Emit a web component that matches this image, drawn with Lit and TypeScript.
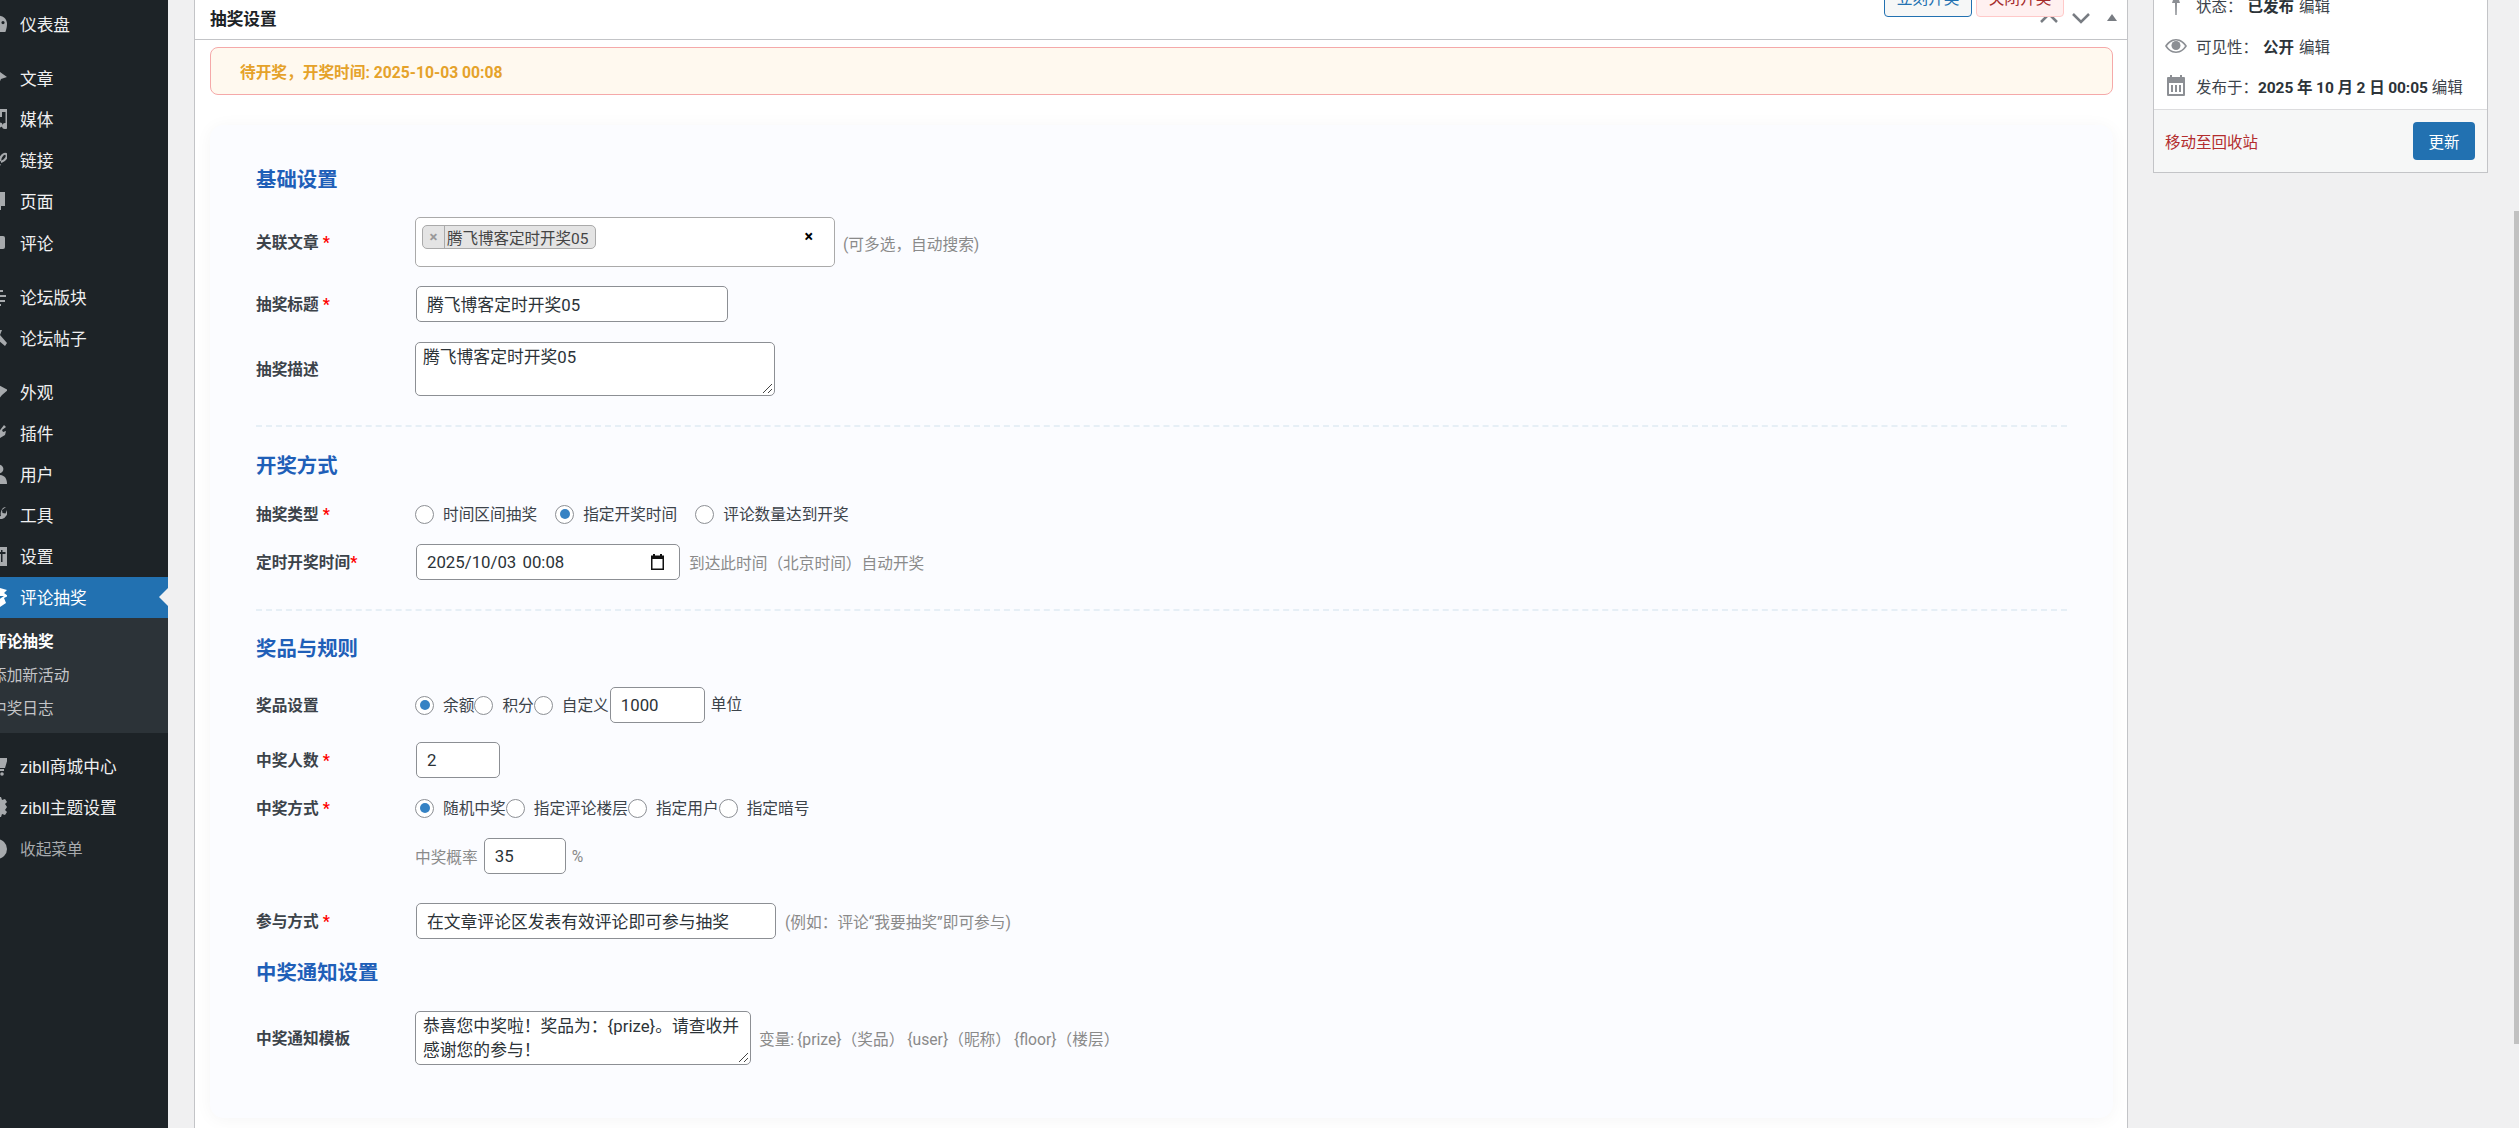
import { LitElement, html, css, svg } from "lit";
import { customElement } from "lit/decorators.js";

const ICONS: Record<string, unknown> = {
  dash: svg`<path fill-rule="evenodd" d="M10 2a8 8 0 0 1 10 8c0 3-.6 5-1.6 8H3C2 15 1 13 1 10a9 9 0 0 1 9-8zm6 5a1.6 1.6 0 1 0 0 3.2A1.6 1.6 0 0 0 16 7z"/>`,
  post: svg`<path d="M9 1l11 8-6 2-3 7-8-6 2-5z"/><path d="M13 11l-3 3-2-2z" fill="#8a5a3a"/>`,
  media: svg`<path d="M13 0h8v17a3 3 0 1 1-2.5-3V3H15v5h-2zM8 2h3v4H8z"/><circle cx="13" cy="16" r="2.4"/>`,
  link: svg`<path fill="none" stroke="#a7aaad" stroke-width="2.2" d="M13 11c0-5 4-8 6-7 2 2 0 6-5 8"/><path fill="none" stroke="#a7aaad" stroke-width="2.2" d="M13 14l-3 4"/>`,
  page: svg`<path d="M5 1h13v14h-4v4H5z"/>`,
  comment: svg`<path d="M5 3h11a2 2 0 0 1 2 2v9a2 2 0 0 1-2 2H5z"/>`,
  forum: svg`<path fill="none" stroke="#a7aaad" stroke-width="2" d="M4 4h12M2 9h17M4 14h14M9 18h5"/>`,
  tack: svg`<path d="M11 2l4 0-2 5 7 8-2 3-8-7-4 2 0-4z"/>`,
  brush: svg`<path d="M8 1l13 7-6 5-5 6-6-7z"/>`,
  plug: svg`<path d="M17 2l2 2-4 3 1 2 3-1-1 4-5 3-4 3-3-3 5-5z"/>`,
  user: svg`<circle cx="12" cy="5" r="4.4"/><path d="M3 20c0-6 3-9 9-9s8 4 8 9z"/>`,
  tool: svg`<path d="M19 2l-4 3 .5 3 3 .5L20 5a7 7 0 0 1-5 9c-3 .3-5-.6-7-3l2-2c1 2 3 2.400 4 2-1-2 0-9 5-9z"/>`,
  set: svg`<path fill-rule="evenodd" d="M3 1h17v19H3zM14 4v2h-3v2h3v8h1.500V8h3V6h-3V4zM11 10v6h1v-6z"/>`,
  gift: svg`<path d="M9 0l11 3-3 3 4 3-4 2 2 5-6 4-7-2-1-9 7-2-6-2z"/><path d="M11 9l6 0-6 4z" fill="#2271b1"/>`,
  cart: svg`<path d="M4 2h17l-3 10H8v1h9v2H6V4H4z"/><circle cx="8" cy="18" r="1.800"/><circle cx="15" cy="18" r="1.800"/>`,
  gear: svg`<path d="M10 0h4l1 3 3-1 2 3-2 2 2 3-2 3 2 2-2 3-3-1-1 3h-4l-1-3-6 0V2l6 1z"/>`,
  collapse: svg`<circle cx="10" cy="10" r="10"/>`,
};

const MENU = [
  ["dash", "仪表盘"],
  null,
  ["post", "文章"],
  ["media", "媒体"],
  ["link", "链接"],
  ["page", "页面"],
  ["comment", "评论"],
  null,
  ["forum", "论坛版块"],
  ["tack", "论坛帖子"],
  null,
  ["brush", "外观"],
  ["plug", "插件"],
  ["user", "用户"],
  ["tool", "工具"],
  ["set", "设置"],
] as const;

@customElement("app-root")
export class AppRoot extends LitElement {
  static styles = css`
    :host {
      display: flex;
      width: 2519px;
      height: 1128px;
      overflow: hidden;
      background: #f0f0f1;
      color: #2c3338;
      font-family: Roboto, "Noto Sans CJK SC", sans-serif;
      font-size: 15.7px;
    }
    /* admin menu */
    .nav {
      width: 168px;
      flex: none;
      background: #1d2327;
      overflow: hidden;
      padding-top: 3.500px;
      box-sizing: border-box;
      color: #f0f0f1;
    }
    .mi {
      height: 41.100px;
      display: flex;
      align-items: center;
      font-size: 16.7px;
    }
    .mi svg {
      width: 20px;
      height: 20px;
      flex: none;
      margin-left: -13px;
      margin-right: 13px;
      fill: #a7aaad;
    }
    .sep { height: 13px; }
    .mi.cur { background: #2271b1; color: #fff; }
    .mi.cur svg { fill: #fff; }
    .arrow {
      margin-left: auto;
      width: 0;
      height: 0;
      border: 9px solid transparent;
      border-right-color: #f0f0f1;
      border-left-width: 0;
    }
    .sub {
      background: #2c3338;
      height: 115px;
      padding-top: 7.500px;
      box-sizing: border-box;
      margin-bottom: 13px;
      font-size: 15.7px;
      color: #c3c4c7;
    }
    .sub div {
      height: 33.500px;
      line-height: 33.500px;
      margin-left: -9px;
      white-space: nowrap;
    }
    .sub .on { color: #fff; font-weight: 700; }
    .mi.dim { color: #a7aaad; font-size: 15.700px; }

    /* main metabox */
    .box {
      width: 1934px;
      margin-left: 26px;
      flex: none;
      background: #fff;
      border-left: 1px solid #c3c4c7;
      border-right: 1px solid #c3c4c7;
      box-sizing: border-box;
    }
    .head {
      height: 40px;
      box-sizing: border-box;
      border-bottom: 1px solid #c3c4c7;
      display: flex;
      align-items: center;
      padding: 0 5px 0 15px;
    }
    .head h2 {
      margin: 0 0 4px;
      font-size: 16.700px;
      font-weight: 700;
      color: #1d2327;
    }
    .tb {
      position: relative;
      z-index: 1;
      align-self: flex-start;
      width: 88px;
      height: 39px;
      margin-top: -22px;
      box-sizing: border-box;
      border: 1px solid #2271b1;
      border-radius: 4px;
      background: #f6f7f7;
      color: #2271b1;
      display: flex;
      align-items: center;
      justify-content: center;
      font-size: 15.700px;
    }
    .tb.go { margin-left: auto; }
    .tb.off {
      margin-left: 4px;
      background: #fff0f0;
      border-color: #ffc9c9;
      color: #a52a2a;
    }
    .ch { width: 20px; height: 20px; flex: none; margin-bottom: 3px; }
    .ch.u { margin-left: -25px; }
    .ch.d { margin-left: 12px; }
    .ch.t { margin-left: 11px; }
    .pad { padding: 0 14px 0 15px; }
    .notice {
      margin-top: 7px;
      height: 48px;
      box-sizing: border-box;
      border: 1px solid #f5a9a9;
      border-radius: 8px;
      background: #fff9ef;
      color: #e5a22a;
      font-weight: 700;
      padding-left: 29px;
      display: flex;
      align-items: center;
    }
    .card {
      margin-top: 30px;
      background: #fbfcff;
      border-radius: 14px;
      box-shadow: 0 2px 18px rgba(0, 0, 0, 0.045);
      padding: 40px 46px 53px;
    }
    h3 {
      margin: 0;
      height: 28px;
      line-height: 30px;
      font-size: 20.400px;
      font-weight: 700;
      color: #1f5fb8;
    }
    .row {
      display: grid;
      grid-template-columns: 159px 1fr;
      align-items: center;
    }
    .ctl {
      display: flex;
      align-items: center;
    }
    .lb { font-weight: 700; color: #3c434a; padding-bottom: 2px; }
    .req { color: #f00; }
    .m19 { margin-top: 19px; }
    .m20 { margin-top: 20px; }
    .m23 { margin-top: 23px; }
    .m24 { margin-top: 24px; }
    .m25 { margin-top: 25px; }
    .m29 { margin-top: 29px; }
    .hr { border-top: 2px dashed #e6eff6; }
    .fld {
      height: 36px;
      box-sizing: border-box;
      border: 1px solid #8c8f94;
      border-radius: 5px;
      background: #fff;
      color: #2c3338;
      padding: 0 10px;
      display: flex;
      align-items: center;
      font-size: 16.800px;
      white-space: nowrap;
    }
    .in { margin-left: 1px; }
    .w312 { width: 312px; }
    .w264 { width: 264px; justify-content: space-between; padding-right: 15px; word-spacing: 2px; }
    .w95 { width: 95px; }
    .w84 { width: 84px; }
    .w82 { width: 82px; }
    .w360 { width: 360px; }
    .ta {
      position: relative;
      height: 54px;
      box-sizing: border-box;
      border: 1px solid #8c8f94;
      border-radius: 5px;
      background: #fff;
      font-size: 16.800px;
      line-height: 24px;
      padding: 2px 7px;
      white-space: nowrap;
    }
    .ta.a { width: 360px; }
    .ta.b { width: 336px; }
    .grip {
      position: absolute;
      right: 1px;
      bottom: 1px;
      width: 13px;
      height: 13px;
    }
    .sel {
      width: 420px;
      height: 50px;
      box-sizing: border-box;
      border: 1px solid #aaa;
      border-radius: 5px;
      background: #fff;
      padding: 7px 21px 0 6px;
      display: flex;
      align-items: flex-start;
      justify-content: space-between;
    }
    .tag {
      height: 24px;
      box-sizing: border-box;
      border: 1px solid #aaa;
      border-radius: 5px;
      background: #e4e4e4;
      display: flex;
      align-items: center;
      padding-right: 7px;
      font-size: 15.500px;
      color: #444;
    }
    .tag i {
      width: 21px;
      height: 22px;
      margin-right: 2px;
      border-right: 1px solid #aaa;
      color: #999;
      font-style: normal;
      font-weight: 700;
      font-size: 15px;
      line-height: 22px;
      text-align: center;
    }
    .clr { color: #000; font-weight: 700; font-size: 16px; line-height: 24px; }
    .hint { color: #8a8a8a; white-space: nowrap; }
    .hint.s8 { margin-left: 8px; }
    .hint.s9 { margin-left: 9px; }
    .hint.up { margin-top: 3px; }
    .hint.tight { word-spacing: -1px; }
    .rgroup { height: 22px; grid-template-rows: 22px; }
    .r {
      display: flex;
      align-items: center;
      white-space: nowrap;
      color: #3c434a;
    }
    .r.sp { margin-right: 18px; }
    .rt { padding-bottom: 2px; }
    .dot {
      width: 19px;
      height: 19px;
      box-sizing: border-box;
      border: 1px solid #8c8f94;
      border-radius: 50%;
      background: #fff;
      margin-right: 9px;
      display: flex;
      align-items: center;
      justify-content: center;
      flex: none;
    }
    .dot.on::after {
      content: "";
      width: 10px;
      height: 10px;
      border-radius: 50%;
      background: #3582c4;
    }
    .unit { margin-left: 6px; color: #3c434a; margin-top: -3px; }
    .pct { margin-left: 6px; }
    .pl { margin-right: 6px; }
    .cal { width: 13px; height: 16px; flex: none; }

    /* publish panel */
    .side {
      width: 335px;
      height: 173px;
      margin-left: 25px;
      flex: none;
      box-sizing: border-box;
      border: 1px solid #c3c4c7;
      border-top: 0;
      background: #fff;
      display: flex;
      flex-direction: column;
    }
    .pub {
      height: 109px;
      overflow: hidden;
      border-bottom: 1px solid #dcdcde;
      box-sizing: content-box;
    }
    .pub > div {
      height: 40.500px;
      display: flex;
      align-items: center;
      padding-left: 11px;
      white-space: nowrap;
      font-size: 15.500px;
      color: #3c434a;
    }
    .pub > div:first-child { margin-top: -15px; }
    .pub svg {
      width: 22px;
      height: 22px;
      margin-right: 9px;
      flex: none;
      fill: #8c8f94;
    }
    .pub b { color: #2c3338; font-weight: 700; margin: 0 5px; }
    .pub b.n { margin: 0 4px 0 0; letter-spacing: -0.1px; }
    .act {
      flex: 1;
      background: #f6f7f7;
      display: flex;
      align-items: center;
      justify-content: space-between;
      padding: 0 12px 0 11px;
      font-size: 15.500px;
    }
    .act span { color: #b32d2e; }
    .upd {
      width: 62px;
      height: 38px;
      border-radius: 4px;
      background: #2271b1;
      color: #fff;
      display: flex;
      align-items: center;
      justify-content: center;
    }
    .sb {
      width: 5px;
      height: 833px;
      margin-top: 211px;
      margin-left: auto;
      background: #c1c1c1;
      flex: none;
    }
  `;

  private icon(k: string) {
    return html`<svg viewBox="0 0 20 20">${ICONS[k]}</svg>`;
  }

  private mi(k: string, t: unknown, cls = "") {
    return html`<div class="mi ${cls}">${this.icon(k)}<span>${t}</span></div>`;
  }

  private radio(t: string, on = false, cls = "") {
    return html`<span class="r ${cls}"><span class="dot ${on ? "on" : ""}"></span><span class="rt">${t}</span></span>`;
  }

  private grip() {
    return html`<svg class="grip" viewBox="0 0 13 13"><path d="M12 3L3 12M12 8L8 12" stroke="#444" stroke-width="1" fill="none"/></svg>`;
  }

  render() {
    const star = html`<span class="req">*</span>`;
    return html`
      <nav class="nav">
        ${MENU.map((m) => (m ? this.mi(m[0], m[1]) : html`<div class="sep"></div>`))}
        <div class="mi cur">${this.icon("gift")}<span>评论抽奖</span><span class="arrow"></span></div>
        <div class="sub">
          <div class="on">评论抽奖</div>
          <div>添加新活动</div>
          <div>中奖日志</div>
        </div>
        ${this.mi("cart", "zibll商城中心")}
        ${this.mi("gear", "zibll主题设置")}
        ${this.mi("collapse", "收起菜单", "dim")}
      </nav>

      <section class="box">
        <header class="head">
          <h2>抽奖设置</h2>
          <span class="tb go">立刻开奖</span>
          <span class="tb off">关闭开奖</span>
          <svg class="ch u" viewBox="0 0 20 20"><path d="M2 14l8-8 8 8" fill="none" stroke="#787c82" stroke-width="2.500"/></svg>
          <svg class="ch d" viewBox="0 0 20 20"><path d="M2 6l8 8 8-8" fill="none" stroke="#787c82" stroke-width="2.500"/></svg>
          <svg class="ch t" viewBox="0 0 20 20"><path d="M5 13l5-7 5 7z" fill="#787c82"/></svg>
        </header>
        <div class="pad">
          <div class="notice">待开奖，开奖时间: 2025-10-03 00:08</div>
          <div class="card">
            <h3>基础设置</h3>
            <div class="row m24">
              <div class="lb">关联文章 ${star}</div>
              <div class="ctl">
                <div class="sel">
                  <span class="tag"><i>×</i>腾飞博客定时开奖05</span>
                  <span class="clr">×</span>
                </div>
                <span class="hint s8 up">(可多选，自动搜索)</span>
              </div>
            </div>
            <div class="row m19">
              <div class="lb">抽奖标题 ${star}</div>
              <div class="ctl"><div class="fld in w312">腾飞博客定时开奖05</div></div>
            </div>
            <div class="row m20">
              <div class="lb">抽奖描述</div>
              <div class="ctl"><div class="ta a">腾飞博客定时开奖05${this.grip()}</div></div>
            </div>
            <div class="hr m29"></div>

            <h3 class="m24">开奖方式</h3>
            <div class="row m24 rgroup">
              <div class="lb">抽奖类型 ${star}</div>
              <div class="ctl">
                ${this.radio("时间区间抽奖", false, "sp")}
                ${this.radio("指定开奖时间", true, "sp")}
                ${this.radio("评论数量达到开奖")}
              </div>
            </div>
            <div class="row m19">
              <div class="lb">定时开奖时间${star}</div>
              <div class="ctl">
                <div class="fld in w264">
                  <span>2025/10/03 00:08</span>
                  <svg class="cal" viewBox="0 0 13 16"><path fill-rule="evenodd" d="M2 0h2v1.500h5V0h2v1.500h2V16H0V1.500h2zM1.500 5v9.500h10V5z" fill="#111"/></svg>
                </div>
                <span class="hint s9">到达此时间（北京时间）自动开奖</span>
              </div>
            </div>
            <div class="hr m29"></div>

            <h3 class="m23">奖品与规则</h3>
            <div class="row m25">
              <div class="lb">奖品设置</div>
              <div class="ctl">
                ${this.radio("余额", true)}${this.radio("积分")}${this.radio("自定义")}
                <div class="fld in w95">1000</div>
                <span class="unit">单位</span>
              </div>
            </div>
            <div class="row m19">
              <div class="lb">中奖人数 ${star}</div>
              <div class="ctl"><div class="fld in w84">2</div></div>
            </div>
            <div class="row m19 rgroup">
              <div class="lb">中奖方式 ${star}</div>
              <div class="ctl">
                ${this.radio("随机中奖", true)}${this.radio("指定评论楼层")}${this.radio("指定用户")}${this.radio("指定暗号")}
              </div>
            </div>
            <div class="row m19">
              <div></div>
              <div class="ctl">
                <span class="hint pl">中奖概率</span>
                <div class="fld w82">35</div>
                <span class="hint pct">%</span>
              </div>
            </div>
            <div class="row m29">
              <div class="lb">参与方式 ${star}</div>
              <div class="ctl">
                <div class="fld in w360">在文章评论区发表有效评论即可参与抽奖</div>
                <span class="hint s9">(例如：评论“我要抽奖”即可参与)</span>
              </div>
            </div>

            <h3 class="m19">中奖通知设置</h3>
            <div class="row m25">
              <div class="lb">中奖通知模板</div>
              <div class="ctl">
                <div class="ta b">恭喜您中奖啦！奖品为：{prize}。请查收并<br />感谢您的参与！${this.grip()}</div>
                <span class="hint s8 tight">变量: {prize}（奖品） {user}（昵称） {floor}（楼层）</span>
              </div>
            </div>
          </div>
        </div>
      </section>

      <aside class="side">
        <div class="pub">
          <div>
            <svg viewBox="0 0 22 22"><path d="M7 0h8l-1 6 1 3H12l-.300 12h-1.400L10 9H7l1-3z"/></svg>
            状态：<b>已发布</b>编辑
          </div>
          <div>
            <svg viewBox="0 0 22 22"><path fill-rule="evenodd" d="M11 4c5 0 9 3.500 11 7-2 3.500-6 7-11 7S2 14.500 0 11c2-3.500 6-7 11-7zM2 11c2 3 5 5.500 9 5.500s7-2.500 9-5.500c-2-3-5-5.500-9-5.500S4 8 2 11z"/><circle cx="11" cy="10.500" r="4.500"/></svg>
            可见性：<b>公开</b>编辑
          </div>
          <div>
            <svg viewBox="0 0 22 22"><path fill-rule="evenodd" d="M3 2h2V0h2v2h8V0h2v2h2q1 0 1 1v17q0 1-1 1H3q-1 0-1-1V3q0-1 1-1zm1 6v11h14V8zm2 2h2v7H6zm4 0h2v7h-2zm4 0h2v7h-2z"/></svg>
            发布于：<b class="n">2025 年 10 月 2 日 00:05</b>编辑
          </div>
        </div>
        <div class="act">
          <span>移动至回收站</span>
          <div class="upd">更新</div>
        </div>
      </aside>
      <div class="sb"></div>
    `;
  }
}
